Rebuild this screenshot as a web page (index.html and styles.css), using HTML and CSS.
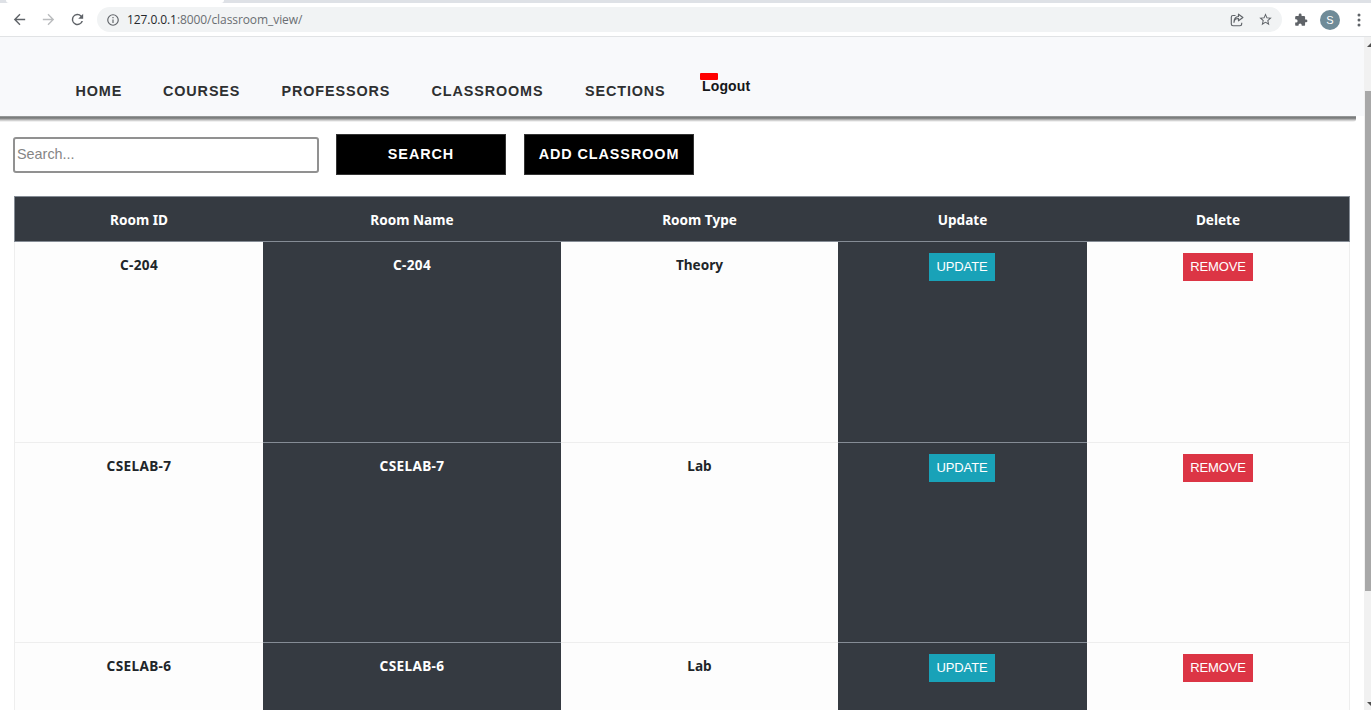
FILE: index.html
```html
<!DOCTYPE html>
<html lang="en">
<head>
<meta charset="utf-8">
<title>Classrooms</title>
<link rel="stylesheet" href="styles.css">
</head>
<body>
<div class="tabstrip"><span class="active-tab"></span></div>
<header class="toolbar">
  <svg class="icon" viewBox="0 0 24 24"><path d="M20 11H7.8l5.6-5.6L12 4l-8 8 8 8 1.4-1.4L7.8 13H20z"/></svg>
  <svg class="icon muted" viewBox="0 0 24 24"><path d="M4 11h12.2l-5.6-5.6L12 4l8 8-8 8-1.4-1.4 5.6-5.6H4z"/></svg>
  <svg class="icon" viewBox="0 0 24 24"><path d="M17.65 6.35A8 8 0 1 0 19.73 14h-2.08A6 6 0 1 1 12 6c1.66 0 3.14.69 4.22 1.78L13 11h7V4z"/></svg>
  <div class="address">
    <svg class="info" viewBox="0 0 24 24"><path d="M11 7h2v2h-2zm0 4h2v6h-2zm1-9a10 10 0 1 0 0 20 10 10 0 0 0 0-20zm0 18a8 8 0 1 1 0-16 8 8 0 0 1 0 16z"/></svg>
    <span class="url"><b>127.0.0.1</b>:8000/classroom_view/</span>
    <svg class="share" viewBox="0 0 14 14"><path d="M5.500 2.500H3A1.700 1.700 0 0 0 1.300 4.200V11A1.700 1.700 0 0 0 3 12.700H10A1.700 1.700 0 0 0 11.700 11V9.800M4 9.300C4.300 6.300 6 5.500 8.500 5.500V7.800L12.900 4.500 8.500 1.200V3.500C5.500 3.700 4 5.900 4 9.300Z"/></svg>
    <svg class="star" viewBox="0 0 24 24"><path d="M22 9.240l-7.190-.620L12 2 9.190 8.630 2 9.240l5.460 4.730L5.820 21 12 17.270 18.180 21l-1.630-7.030zM12 15.400l-3.760 2.270 1-4.280-3.320-2.880 4.380-.380L12 6.100l1.710 4.040 4.380.380-3.320 2.880 1 4.280z"/></svg>
  </div>
  <svg class="puzzle" viewBox="0 0 24 24"><path d="M20.500 11H19V7a2 2 0 0 0-2-2h-4V3.500a2.500 2.500 0 0 0-5 0V5H4a2 2 0 0 0-2 2v3.800h1.500a2.700 2.700 0 0 1 0 5.400H2V20a2 2 0 0 0 2 2h3.800v-1.500a2.700 2.700 0 0 1 5.400 0V22H17a2 2 0 0 0 2-2v-4h1.500a2.500 2.500 0 0 0 0-5z"/></svg>
  <span class="avatar">S</span>
  <svg class="dots" viewBox="0 0 4 14"><circle cx="2" cy="2" r="1.500"/><circle cx="2" cy="7" r="1.500"/><circle cx="2" cy="12" r="1.500"/></svg>
</header>
<div class="viewport">
  <main class="page">
    <nav class="nav">
      <a class="home">HOME</a><a class="courses">COURSES</a><a class="professors">PROFESSORS</a><a class="classrooms">CLASSROOMS</a><a class="sections">SECTIONS</a>
      <span class="logout"><i class="logout-mark"></i><span class="logout-text">Logout</span></span>
    </nav>
    <div class="nav-shadow"></div>
    <form class="search">
      <input class="field" type="text" placeholder="Search...">
      <button class="action" type="button">SEARCH</button>
      <button class="action" type="button">ADD CLASSROOM</button>
    </form>
    <div class="table">
      <div class="row head"><span>Room ID</span><span>Room Name</span><span>Room Type</span><span>Update</span><span>Delete</span></div>
      <div class="row first"><span class="cell code">C-204</span><span class="cell dark code">C-204</span><span class="cell">Theory</span><span class="cell dark"><button class="update" type="button">UPDATE</button></span><span class="cell"><button class="remove" type="button">REMOVE</button></span></div>
      <div class="row"><span class="cell code">CSELAB-7</span><span class="cell dark code">CSELAB-7</span><span class="cell">Lab</span><span class="cell dark"><button class="update" type="button">UPDATE</button></span><span class="cell"><button class="remove" type="button">REMOVE</button></span></div>
      <div class="row"><span class="cell code">CSELAB-6</span><span class="cell dark code">CSELAB-6</span><span class="cell">Lab</span><span class="cell dark"><button class="update" type="button">UPDATE</button></span><span class="cell"><button class="remove" type="button">REMOVE</button></span></div>
    </div>
  </main>
  <aside class="scrollbar"><i class="arrow up"></i><i class="thumb"></i><i class="arrow down"></i></aside>
</div>
</body>
</html>
```
FILE: styles.css
```css
* { box-sizing: border-box; }
body { margin: 0; height: 710px; overflow: hidden; background: #fff; display: flex; flex-direction: column; font-family: "Liberation Sans", Arial, sans-serif; }
.tabstrip { height: 3px; flex: none; background: #dee1e6; }
.active-tab { display: block; width: 218px; height: 3px; margin-left: 6px; background: #fff; border-radius: 0 0 3px 3px; }
.toolbar { height: 34px; flex: none; display: flex; align-items: center; border-bottom: 1px solid #e1e3e5; padding-left: 11px; }
.icon { width: 17px; height: 17px; margin-right: 12px; fill: #5f6368; }
.icon.muted { fill: #babcbe; }
.address { width: 1185px; height: 25px; border-radius: 13px; background: #f1f3f4; display: flex; align-items: center; padding: 0 9px; margin-left: -1px; }
.info { width: 14px; height: 14px; fill: #5f6368; }
.url { flex: 1; margin-left: 7px; font: 12px "Open Sans", sans-serif; letter-spacing: -.08px; color: #6a6e72; }
.url b { font-weight: 400; color: #25282b; }
.share { width: 14px; height: 14px; fill: none; stroke: #5f6368; stroke-width: 1.15; stroke-linejoin: round; }
.star { width: 15px; height: 15px; margin-left: 14px; fill: #5f6368; }
.puzzle { width: 14px; height: 14px; margin-left: 12px; fill: #5f6368; }
.avatar { width: 20px; height: 20px; margin-left: 12px; border-radius: 50%; background: #6f8b98; color: #fff; font-size: 11px; line-height: 20px; text-align: center; }
.dots { width: 4px; height: 14px; margin-left: 17px; fill: #5f6368; }
.viewport { height: 673px; display: flex; overflow: hidden; }
.page { width: 1364px; flex: none; }
.nav { height: 79px; background: #f8f9fb; display: flex; align-items: flex-start; padding: 45px 0 0 75.500px; color: #2e3031; font-size: 14.4px; font-weight: 700; line-height: 18px; letter-spacing: .88px; white-space: nowrap; }
.home { width: 87.500px; }
.courses { width: 118.500px; }
.professors { width: 150px; }
.classrooms { width: 153.500px; }
.sections { width: 115px; }
.logout { position: relative; margin-top: -5px; padding-left: 2px; color: #151719; font-size: 14px; letter-spacing: .14px; }
.logout-text { position: relative; }
.logout-mark { position: absolute; left: 0; top: -4px; width: 18px; height: 7px; border-radius: 1px; background: red; }
.nav-shadow { width: 1356px; height: 6px; border-radius: 0 0 3px 0; background: linear-gradient(#a9abab, #777a7a 20%, #858686 40%, #c9c9c9 70%, #fff); }
.search { display: flex; align-items: flex-start; padding: 12px 0 0 13px; height: 74px; }
.field { width: 306px; height: 36px; margin: 3px 17px 0 0; padding: 0 2px 2px; border: 2px solid #919191; border-radius: 3px; font: 14.4px "Liberation Sans", sans-serif; }
.field::placeholder { color: #858585; }
.action { width: 170px; height: 41px; margin-right: 18px; padding: 0 0 1px; border: 1px solid #333; background: #000; color: #fff; font: 700 14.4px "Liberation Sans", sans-serif; letter-spacing: .92px; white-space: nowrap; }
.table { width: 1336px; margin-left: 14px; font: 700 13.600px "Noto Sans", sans-serif; color: #212529; }
.row { display: grid; grid-template-columns: 249px 298px 277px 249px 263px; height: 200px; text-align: center; }
.row.first { height: 201px; }
.head { height: 46px; line-height: 45px; border: 1px solid #858c95; background: #353a41; color: #fff; grid-template-columns: 248px 298px 277px 249px 262px; }
.cell { padding-top: 11px; line-height: 24px; background: #fdfdfd; border-bottom: 1px solid #eee; }
.code { letter-spacing: .35px; }
.cell:first-child { border-left: 1px solid #eee; }
.cell:last-child { border-right: 1px solid #eee; }
.dark { background: #353a41; color: #fff; border-bottom-color: #858c95; }
.update, .remove { display: block; height: 28px; margin: 0 auto; padding: 0 0 1px; border: 0; color: #fff; font: 13px "Liberation Sans", sans-serif; letter-spacing: -.1px; }
.update { width: 66px; margin-left: 91px; background: #19a2b8; }
.remove { width: 70px; background: #dc3545; }
.scrollbar { width: 7px; height: 673px; flex: none; display: flex; flex-direction: column; background: #f1f1f1; overflow: hidden; }
.arrow { flex: none; width: 10px; margin-left: 3px; border: 5px solid transparent; }
.up { height: 10px; margin-bottom: 44px; border-bottom-color: #505050; border-top: 0; }
.thumb { flex: none; height: 500px; margin-left: 1px; background: #a8a8a8; }
.down { height: 5px; margin-top: 111px; border-top-color: #505050; border-bottom: 0; }
```
